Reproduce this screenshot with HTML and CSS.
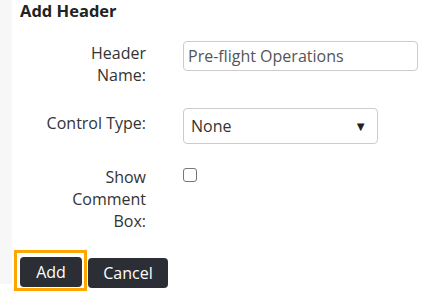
FILE: index.html
```html
<!DOCTYPE html>
<html>
<head>
<meta charset="utf-8">
<link rel="stylesheet" href="styles.css">
</head>
<body>
<div class="page">
  <div class="side"></div>
  <div class="main">
    <div class="title">Add Header</div>
    <div class="form">
      <div class="row row-name">
        <label class="lbl">Header<br>Name:</label>
        <div class="field"><input class="text" type="text" value="Pre-flight Operations"></div>
      </div>
      <div class="row row-type">
        <label class="lbl">Control Type:</label>
        <div class="field">
          <div class="select"><span>None</span><span class="arrow">&#9660;</span></div>
        </div>
      </div>
      <div class="row row-check">
        <label class="lbl">Show<br>Comment<br>Box:</label>
        <div class="field"><span class="check"></span></div>
      </div>
    </div>
    <div class="buttons">
      <div class="focus"><button class="btn">Add</button></div>
      <button class="btn cancel">Cancel</button>
    </div>
  </div>
</div>
</body>
</html>
```
FILE: styles.css
```css
html, body {
  margin: 0;
  padding: 0;
  background: #ffffff;
}
body {
  font-family: "Open Sans", "Noto Sans", sans-serif;
  color: #333333;
  width: 436px;
  height: 292px;
  overflow: hidden;
}
.page {
  display: flex;
  height: 284px;
}
.side {
  width: 12px;
  background: #f7f7f7;
}
.main {
  flex: 1;
  padding-left: 8px;
}
.title {
  font-size: 16.5px;
  font-weight: 700;
  line-height: 22px;
  margin-top: 0;
  color: #222;
}
.form {
  margin-top: 19px;
}
.row {
  display: grid;
  grid-template-columns: 126px 1fr;
  column-gap: 37px;
}
.lbl {
  text-align: right;
  font-size: 16px;
  line-height: 22px;
  color: #333;
}
.row-name .lbl { padding-top: 1px; }
.row-type { margin-top: 22px; }
.row-type .lbl { padding-top: 4px; }
.row-check { margin-top: 22px; }
.row-check .lbl { padding-top: 0; }
.text {
  box-sizing: border-box;
  width: 235px;
  height: 30px;
  border: 1px solid #cccccc;
  border-radius: 4px;
  padding: 0 4px;
  font-family: "Open Sans", "Noto Sans", sans-serif;
  font-size: 16px;
  color: #555555;
  outline: none;
}
.select {
  box-sizing: border-box;
  width: 195px;
  height: 36px;
  border: 1px solid #cccccc;
  border-radius: 4px;
  display: flex;
  align-items: center;
  justify-content: space-between;
  padding: 0 10px 0 7px;
  font-size: 16px;
  color: #333;
}
.arrow {
  font-size: 13px;
  color: #222;
}
.check {
  display: block;
  margin-top: 2px;
  width: 14px;
  height: 14px;
  box-sizing: border-box;
  border: 1px solid #767676;
  border-radius: 3px;
  background: #fff;
}
.buttons {
  display: flex;
  align-items: center;
  margin-top: 18px;
  margin-left: -6px;
  gap: 1px;
}
.focus {
  border: 3px solid #ffa500;
  padding: 4px 2px 1px 3px;
}
.btn {
  height: 30px;
  border: none;
  border-radius: 4px;
  background: #2b2e35;
  color: #ffffff;
  font-family: "Open Sans", "Noto Sans", sans-serif;
  font-size: 16px;
  padding: 0;
  width: 62px;
}
.cancel {
  width: 80px;
  margin-top: 4px;
}
```
